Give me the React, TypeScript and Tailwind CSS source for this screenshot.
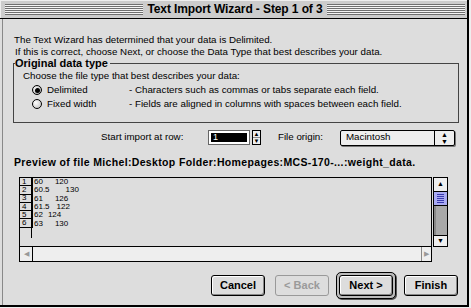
import React from "react";

const rows = [
  { n: "1", a: "60", b: "120", gap: "ml-[12px]" },
  { n: "2", a: "60.5", b: "130", gap: "ml-[16px]" },
  { n: "3", a: "61", b: "126", gap: "ml-[12px]" },
  { n: "4", a: "61.5", b: "122", gap: "ml-[7px]" },
  { n: "5", a: "62", b: "124", gap: "ml-[5px]" },
  { n: "6", a: "63", b: "130", gap: "ml-[12px]" },
];

function Stripes() {
  return (
    <div className="flex-1 h-[11px] bg-[repeating-linear-gradient(to_bottom,#6f6f6f_0px,#6f6f6f_1px,#f4f4f4_1px,#f4f4f4_2px)]" />
  );
}

function Radio({ checked }: { checked?: boolean }) {
  return (
    <div
      className={
        "w-[10px] h-[10px] rounded-full border border-black flex items-center justify-center " +
        (checked
          ? "bg-[radial-gradient(circle_at_35%_35%,#ffffff,#9a9a9a)]"
          : "bg-[radial-gradient(circle_at_35%_35%,#ffffff,#bbbbbb)]")
      }
    >
      {checked && <div className="w-[5px] h-[5px] rounded-full bg-black" />}
    </div>
  );
}

function Button({
  label,
  disabled,
  className,
}: {
  label: string;
  disabled?: boolean;
  className?: string;
}) {
  return (
    <div
      className={
        "h-[21px] w-[54px] rounded-[3px] border flex items-center justify-center text-[11px] font-bold " +
        (disabled
          ? "border-[#999999] text-[#9a9a9a] bg-[#dddddd]"
          : "border-black text-black bg-[#dddddd] shadow-[inset_1px_1px_0_#ffffff,inset_-1px_-1px_0_#888888]") +
        " " +
        (className ?? "")
      }
    >
      {label}
    </div>
  );
}

export default function App() {
  return (
    <div className="w-[471px] h-[308px] bg-[#eeeeee] overflow-hidden font-['Liberation_Sans',Arial,sans-serif] text-black">
      <div className="w-[469px] h-[307px] flex flex-col border-r-2 border-b-2 border-black bg-[#dddddd]">
        {/* title bar */}
        <div className="h-[19px] shrink-0 bg-[#cccccc] border-b border-black flex items-center pl-[5px] pr-[2px] gap-[3px] shadow-[inset_1px_1px_0_#eeeeee]">
          <Stripes />
          <div className="text-[12px] font-bold leading-none tracking-[-0.1px] px-[1px]">
            Text Import Wizard - Step 1 of 3
          </div>
          <Stripes />
        </div>

        <div className="flex-1 flex flex-col ml-[2px] border-l border-[#888888] pl-[10px] text-[9.75px]">
          <div className="pt-[15px] leading-[12px] pl-[1px]">
            <div>The Text Wizard has determined that your data is Delimited.</div>
            <div className="pl-[1px]">
              If this is correct, choose Next, or choose the Data Type that best describes your data.
            </div>
          </div>

          {/* group box */}
          <div className="mt-[5px] w-[446px] h-[60px] shrink-0 border border-[#444444] relative pl-[9px] pt-[5px] leading-[14px]">
            <div className="absolute left-[1px] top-[-7px] bg-[#dddddd] pr-[2px] text-[11px] font-bold leading-[12px]">
              Original data type
            </div>
            <div>Choose the file type that best describes your data:</div>
            <div className="flex items-center">
              <div className="w-[24px] flex justify-end pr-[5px]">
                <Radio checked />
              </div>
              <div className="w-[82px]">Delimited</div>
              <div>- Characters such as commas or tabs separate each field.</div>
            </div>
            <div className="flex items-center">
              <div className="w-[24px] flex justify-end pr-[5px]">
                <Radio />
              </div>
              <div className="w-[82px]">Fixed width</div>
              <div>- Fields are aligned in columns with spaces between each field.</div>
            </div>
          </div>

          {/* start row / origin */}
          <div className="mt-[6px] h-[17px] shrink-0 flex items-center">
            <div className="ml-[88px] w-[107px]">Start import at row:</div>
            <div className="w-[42px] h-[15px] border border-[#666666] bg-white p-[1px]">
              <div className="w-full h-full bg-black border border-white flex items-center pl-[2px]">
                <span className="text-white text-[9px] leading-none">1</span>
              </div>
            </div>
            <div className="ml-[2px] w-[9px] h-[15px] border border-black bg-[#eeeeee] flex flex-col text-[6px] leading-none">
              <div className="flex-1 flex items-center justify-center border-b border-[#888888]">▲</div>
              <div className="flex-1 flex items-center justify-center">▼</div>
            </div>
            <div className="ml-[17px] w-[62px]">File origin:</div>
            <div className="w-[115px] h-[16px] border border-black rounded-[2px] bg-[#eeeeee] flex shadow-[1px_1px_0_#777777]">
              <div className="flex-1 pl-[5px] flex items-center">Macintosh</div>
              <div className="w-[20px] border-l border-black flex items-center justify-center text-[7px] leading-none">
                <div className="flex flex-col items-center">
                  <span>▲</span>
                  <span>▼</span>
                </div>
              </div>
            </div>
          </div>

          {/* preview label */}
          <div className="mt-[10px] pl-[1px] text-[10.5px] font-bold tracking-[0.35px] leading-[12px]">
            Preview of file Michel:Desktop Folder:Homepages:MCS-170-...:weight_data.
          </div>

          {/* preview */}
          <div className="mt-[9px] ml-[6px] flex shrink-0">
            <div className="flex flex-col">
              <div className="w-[413px] h-[70px] border border-black bg-[#dddddd] overflow-hidden">
                {rows.map((r) => (
                  <div key={r.n} className="flex h-[8.3px] items-center text-[8px] leading-[8px]">
                    <div className="w-[12px] h-full border-r border-b border-black flex items-center pl-[2px]">
                      {r.n}
                    </div>
                    <div className="pl-[1px] border-l border-black h-full flex items-center">
                      <span>{r.a}</span>
                      <span className={r.gap}>{r.b}</span>
                    </div>
                  </div>
                ))}
                <div className="flex h-[10px]">
                  <div className="w-[12px] h-full border-r border-black" />
                </div>
              </div>
              <div className="w-[413px] h-[15px] border border-t-0 border-black bg-[#eeeeee] flex">
                <div className="w-[13px] border-r border-black flex items-center justify-center text-[7px] text-[#999999]">
                  ◀
                </div>
                <div className="flex-1" />
                <div className="w-[10px] border-l border-[#888888] flex items-center justify-center text-[7px] text-[#999999]">
                  ▶
                </div>
              </div>
            </div>
            <div className="ml-[1px] w-[15px] h-[70px] border border-black flex flex-col">
              <div className="h-[14px] border-b border-black bg-[#eeeeee] flex items-center justify-center text-[7px]">
                ▲
              </div>
              <div className="h-[14px] border-b border-black bg-[#a9aaf2] flex flex-col items-center justify-center gap-[1px]">
                {[0, 1, 2, 3, 4].map((i) => (
                  <div key={i} className="w-[7px] h-[1px] bg-[#3a3ab0]" />
                ))}
              </div>
              <div className="flex-1 bg-[#a8a8a8] border-l-2 border-[#888888]" />
              <div className="h-[11px] border-t border-black bg-[#eeeeee] flex items-center justify-center text-[7px]">
                ▼
              </div>
            </div>
          </div>

          {/* buttons */}
          <div className="mt-[10px] flex items-center">
            <Button label="Cancel" className="ml-[198px]" />
            <Button label="< Back" disabled className="ml-[10px]" />
            <div className="ml-[7px] p-[2px] border border-black rounded-[5px] bg-[#bbbbbb] shadow-[1px_1px_0_#555555]">
              <Button label="Next >" className="w-[51px] h-[19px]" />
            </div>
            <Button label="Finish" className="ml-[8px]" />
          </div>
        </div>
      </div>
    </div>
  );
}
